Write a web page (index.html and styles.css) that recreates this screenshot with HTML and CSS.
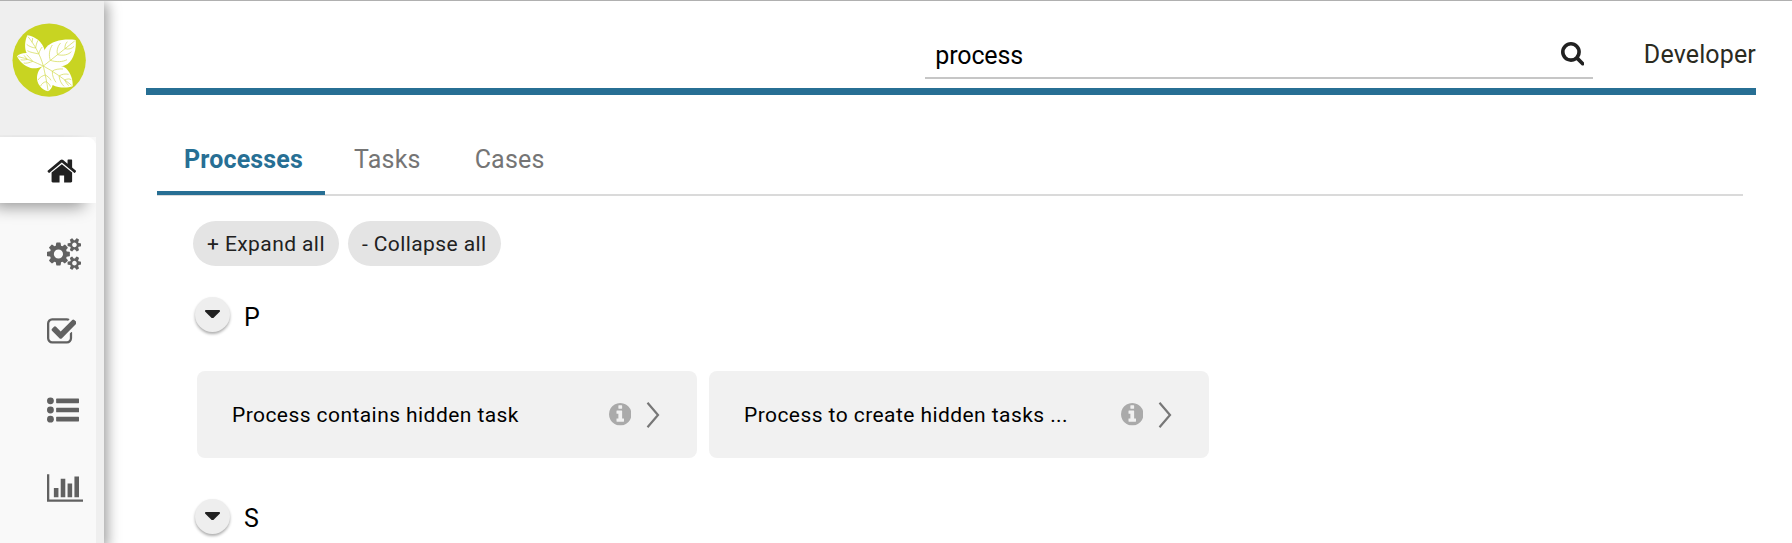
FILE: index.html
```html
<!DOCTYPE html>
<html lang="en">
<head>
<meta charset="utf-8">
<title>Search: process</title>
<link rel="stylesheet" href="styles.css">
</head>
<body>
<svg class="defs" width="0" height="0" aria-hidden="true">
  <symbol id="caret" viewBox="384 640 1024 576"><path d="M1408 704q0 26-19 45l-448 448q-19 19-45 19t-45-19l-448-448q-19-19-19-45t19-45 45-19h896q26 0 45 19t19 45z"/></symbol>
  <symbol id="info" viewBox="128 128 1536 1536"><path d="M1152 1376v-160q0-14-9-23t-23-9h-96v-512q0-14-9-23t-23-9h-320q-14 0-23 9t-9 23v160q0 14 9 23t23 9h96v320h-96q-14 0-23 9t-9 23v160q0 14 9 23t23 9h448q14 0 23-9t9-23zm-128-896v-160q0-14-9-23t-23-9h-192q-14 0-23 9t-9 23v160q0 14 9 23t23 9h192q14 0 23-9t9-23zm640 416q0 209-103 385.5t-279.5 279.5-385.5 103-385.5-103-279.5-279.5-103-385.5 103-385.5 279.5-279.5 385.5-103 385.5 103 279.5 279.5 103 385.5z"/></symbol>
  <symbol id="chevron" viewBox="0 0 14 26"><path d="M1.5 .8 12 13 1.5 25.2" fill="none" stroke="currentColor" stroke-width="2.2"/></symbol>
</svg>
<div class="app">
  <aside class="sidebar">
    <div class="brand">
      <svg class="logo" viewBox="36 68 222 222">
        <circle cx="147.5" cy="179.5" r="110" fill="#c8d422"/>
        <g fill="#fff">
          <path d="M130 197C136 186 139 170 134 150 128 124 104 108 82 105 74 122 73 145 80 158 65 158 55 162 51 168 59 184 72 197 92 203 105 206 118 202 130 197Z"/>
          <path d="M130 197C120 180 126 157 138 142 156 121 191 115 227 119 230 147 221 176 203 191 183 203 154 204 130 197Z"/>
          <path d="M130 197C150 195 183 191 198 204 213 219 219 239 218 258 201 264 175 263 158 254 156 263 151 269 144 273 123 268 110 249 111 231 112 216 119 203 130 197Z"/>
        </g>
        <g class="veins">
          <path d="M130 197 224 122M130 197C121 164 103 132 84 109M130 197C106 187 80 173 54 169M130 197C160 213 192 236 215 255M130 197C135 220 141 247 144 270"/>
          <path d="M151 180C145 164 149 146 157 134M173 163C168 151 175 134 182 128M195 145C194 137 197 129 202 124M151 180C169 186 189 185 201 178M173 163C190 167 206 163 214 154M195 145C206 148 216 145 222 138"/>
          <path d="M116 161C106 158 91 157 82 151M107 143C98 142 88 139 80 132M116 161C119 151 123 143 127 140M107 143C108 135 110 127 114 120M96 126C98 121 97 117 98 113M98 183C89 187 78 190 71 188M82 177C74 179 67 180 62 178M98 183C91 174 83 167 80 163M82 177 72 165"/>
          <path d="M157 212C165 207 177 205 189 206M177 227C186 221 196 220 206 222M194 239C202 235 209 235 214 238M157 212C156 226 162 238 168 246M177 227C179 241 184 250 192 258M194 239C197 246 202 251 206 256M136 224C127 226 119 231 114 239M139 244C131 245 125 250 122 257M136 224C143 228 149 233 153 240M139 244C145 248 149 253 151 259"/>
        </g>
      </svg>
    </div>
    <nav class="menu">
      <a class="menu-item active"><svg class="ico" viewBox="64 0 1664 1792" width="29.7" height="32"><path d="M1472 992v480q0 26-19 45t-45 19h-384v-384h-256v384h-384q-26 0-45-19t-19-45v-480q0-1 .5-3t.5-3l575-474 575 474q1 2 1 6zm223-69l-62 74q-8 9-21 11h-3q-13 0-21-7l-692-577-692 577q-12 8-24 7-13-2-21-11l-62-74q-8-10-7-23.5t11-21.5l719-599q32-26 76-26t76 26l244 204v-195q0-14 9-23t23-9h192q14 0 23 9t9 23v408l219 182q10 8 11 21.5t-7 23.5z"/></svg></a>
      <a class="menu-item"><svg class="ico" viewBox="-64 0 1920 1792" width="34.3" height="32"><path d="M832 896q0-106-75-181t-181-75-181 75-75 181 75 181 181 75 181-75 75-181zm768 512q0-52-38-90t-90-38-90 38-38 90q0 53 37.5 90.5t90.5 37.5 90.5-37.5 37.5-90.5zm0-1024q0-52-38-90t-90-38-90 38-38 90q0 53 37.5 90.5t90.5 37.5 90.5-37.5 37.5-90.5zm-384 421v185q0 10-7 19.5t-16 10.5l-155 24q-11 35-32 76 34 48 90 115 7 11 7 20 0 12-7 19-23 30-82.5 89.5t-78.5 59.5q-11 0-21-7l-115-90q-37 19-77 31-11 108-23 155-7 24-30 24h-186q-11 0-20-7.5t-10-17.5l-23-153q-34-10-75-31l-118 89q-7 7-20 7-11 0-21-8-144-133-144-160 0-9 7-19 10-14 41-53t47-61q-23-44-35-82l-152-24q-10-1-17-9.5t-7-19.5v-185q0-10 7-19.5t16-10.5l155-24q11-35 32-76-34-48-90-115-7-11-7-20 0-12 7-20 22-30 82-89t79-59q11 0 21 7l115 90q34-18 77-32 11-108 23-154 7-24 30-24h186q11 0 20 7.5t10 17.5l23 153q34 10 75 31l118-89q8-7 20-7 11 0 21 8 144 133 144 160 0 8-7 19-12 16-42 54t-45 60q23 48 34 82l152 23q10 2 17 10.5t7 19.5zm640 533v140q0 16-149 31-12 27-30 52 51 113 51 138 0 4-4 7-122 71-124 71-8 0-46-47t-52-68q-20 2-30 2t-30-2q-14 21-52 68t-46 47q-2 0-124-71-4-3-4-7 0-25 51-138-18-25-30-52-149-15-149-31v-140q0-16 149-31 13-29 30-52-51-113-51-138 0-4 4-7 4-2 35-20t59-34 30-16q8 0 46 46.5t52 67.5q20-2 30-2t30 2q51-71 92-112l6-2q4 0 124 70 4 3 4 7 0 25-51 138 17 23 30 52 149 15 149 31zm0-1024v140q0 16-149 31-12 27-30 52 51 113 51 138 0 4-4 7-122 71-124 71-8 0-46-47t-52-68q-20 2-30 2t-30-2q-14 21-52 68t-46 47q-2 0-124-71-4-3-4-7 0-25 51-138-18-25-30-52-149-15-149-31v-140q0-16 149-31 13-29 30-52-51-113-51-138 0-4 4-7 4-2 35-20t59-34 30-16q8 0 46 46.5t52 67.5q20-2 30-2t30 2q51-71 92-112l6-2q4 0 124 70 4 3 4 7 0 25-51 138 17 23 30 52 149 15 149 31z"/></svg></a>
      <a class="menu-item"><svg class="ico" viewBox="64 0 1664 1792" width="29.7" height="32"><path d="M1472 930v318q0 119-84.5 203.5t-203.5 84.5h-832q-119 0-203.5-84.5t-84.5-203.5v-832q0-119 84.5-203.5t203.5-84.5h832q63 0 117 25 15 7 18 23 3 17-9 29l-49 49q-10 10-23 10-3 0-9-2-23-6-45-6h-832q-66 0-113 47t-47 113v832q0 66 47 113t113 47h832q66 0 113-47t47-113v-254q0-13 9-22l64-64q10-10 23-10 6 0 12 3 20 8 20 29zm231-489l-814 814q-24 24-57 24t-57-24l-430-430q-24-24-24-57t24-57l110-110q24-24 57-24t57 24l263 263 647-647q24-24 57-24t57 24l110 110q24 24 24 57t-24 57z"/></svg></a>
      <a class="menu-item"><svg class="ico" viewBox="0 0 1792 1792" width="32" height="32"><circle cx="192" cy="384" r="192"/><circle cx="192" cy="896" r="192"/><circle cx="192" cy="1408" r="192"/><rect x="512" y="256" width="1280" height="256" rx="32"/><rect x="512" y="768" width="1280" height="256" rx="32"/><rect x="512" y="1280" width="1280" height="256" rx="32"/></svg></a>
      <a class="menu-item"><svg class="ico" viewBox="0 0 2048 1792" width="36.6" height="32"><path d="M640 896v512h-256v-512h256zm384-512v1024h-256v-1024h256zm1024 1152v128h-2048v-1536h128v1408h1920zm-640-896v768h-256v-768h256zm384-384v1152h-256v-1152h256z"/></svg></a>
    </nav>
  </aside>
  <main class="main">
    <header class="topbar">
      <div class="search">
        <span class="query">process</span>
        <svg class="search-ico" viewBox="64 128 1664 1664"><path d="M1216 832q0-185-131.5-316.5t-316.5-131.5-316.5 131.5-131.5 316.5 131.5 316.5 316.5 131.5 316.5-131.5 131.5-316.5zm512 832q0 52-38 90t-90 38q-54 0-90-38l-343-342q-179 124-399 124-143 0-273.5-55.5t-225-150-150-225-55.5-273.5 55.5-273.5 150-225 225-150 273.5-55.5 273.5 55.5 225 150 150 225 55.5 273.5q0 220-124 399l343 343q37 37 37 90z"/></svg>
      </div>
      <span class="user">Developer</span>
    </header>
    <div class="tabs">
      <a class="tab selected">Processes</a>
      <a class="tab">Tasks</a>
      <a class="tab">Cases</a>
    </div>
    <div class="content">
      <div class="actions">
        <button class="pill">+ Expand all</button>
        <button class="pill">- Collapse all</button>
      </div>
      <div class="group-head first"><button class="toggle"><svg class="caret"><use href="#caret"/></svg></button><span class="letter">P</span></div>
      <div class="cards">
        <div class="card"><span class="card-name">Process contains hidden task</span><svg class="info"><use href="#info"/></svg><svg class="chevron"><use href="#chevron"/></svg></div>
        <div class="card"><span class="card-name">Process to create hidden tasks ...</span><svg class="info"><use href="#info"/></svg><svg class="chevron"><use href="#chevron"/></svg></div>
      </div>
      <div class="group-head"><button class="toggle"><svg class="caret"><use href="#caret"/></svg></button><span class="letter">S</span></div>
    </div>
  </main>
</div>
</body>
</html>
```
FILE: styles.css
```css
* { box-sizing: border-box; }
body {
  margin: 0;
  height: 543px;
  overflow: hidden;
  background: #fff;
  color: #000;
  font-family: Roboto, sans-serif;
  font-size: 25px;
}
.defs { display: none; }
.app {
  display: flex;
  height: 543px;
  border-top: 1px solid #b0b0b0;
}
.sidebar {
  flex: none;
  width: 104px;
  height: 542px;
  background: #efefef;
  box-shadow: 2px 4px 12px 2px rgba(0, 0, 0, .36);
  clip-path: inset(0 -30px 0 0);
}
.brand { height: 136px; padding: 22px 0 0 12px; }
.logo { display: block; width: 74px; height: 74px; }
.veins { fill: none; stroke: #d3dc55; stroke-width: 2.2; }
.menu { width: 96px; height: 420px; background: #f9f9f9; }
.menu-item {
  display: flex;
  align-items: center;
  height: 78px;
  padding-left: 46.8px;
  color: #616161;
}
.menu-item.active {
  height: 66px;
  margin-bottom: 12px;
  padding-top: 1px;
  background: #fff;
  color: #212121;
  border-radius: 0 9px 0 0;
  box-shadow: -9px 7px 16px -3px rgba(0, 0, 0, .4);
  clip-path: inset(-2px 0 -24px 0);
}
.ico { display: block; fill: currentColor; }
.main { flex: 1; padding: 0 36px 0 42px; }
.topbar {
  display: flex;
  justify-content: flex-end;
  height: 94px;
  border-bottom: 7px solid #276f94;
}
.search {
  display: flex;
  justify-content: space-between;
  width: 668px;
  height: 78px;
  padding: 38px 8.5px 0 10.5px;
  border-bottom: 2px solid #c6c6c6;
}
.query { line-height: 33px; letter-spacing: -.15px; }
.search-ico { width: 23.5px; height: 23.5px; margin-top: 3px; fill: #212121; }
.user { margin: 37px 0 0 51px; line-height: 33px; letter-spacing: .15px; color: #2b2b1f; }
.tabs {
  display: flex;
  height: 101px;
  margin: 0 13px 0 11px;
  padding-top: 47px;
  border-bottom: 2px solid #dadada;
}
.tab {
  height: 53px;
  padding: 0 25px 0 29px;
  line-height: 35px;
  letter-spacing: .2px;
  color: #757575;
}
.tab.selected {
  width: 168px;
  padding-left: 27px;
  border-bottom: 4px solid #276f94;
  letter-spacing: .15px;
  color: #276f94;
  font-weight: 700;
}
.content { padding: 25px 0 0 47px; }
.actions { display: flex; gap: 9px; }
.pill {
  height: 45px;
  padding: 0 14px;
  border: 0;
  border-radius: 23px;
  background: #e4e4e4;
  color: #212121;
  font: 21px Roboto, sans-serif;
  letter-spacing: .41px;
  white-space: nowrap;
}
.group-head { display: flex; align-items: center; gap: 14px; height: 35px; margin: 31px 0 0 2px; }
.toggle {
  display: flex;
  align-items: center;
  justify-content: center;
  width: 35px;
  height: 35px;
  padding: 0 0 1px;
  border: 0;
  border-radius: 50%;
  background: #eee;
  box-shadow: 0 2px 3px rgba(0, 0, 0, .32);
}
.caret { width: 15px; height: 8.5px; fill: #212121; }
.letter { line-height: 32px; padding-top: 5px; }
.first .letter { padding-top: 7px; }
.cards { display: flex; gap: 12px; margin: 39px 0 41px 4px; }
.card {
  display: flex;
  align-items: center;
  width: 500px;
  height: 87px;
  padding: 0 37px 0 35px;
  border-radius: 8px;
  background: #f1f1f1;
}
.card-name { flex: 1; font-size: 21px; letter-spacing: .43px; white-space: nowrap; }
.info { width: 22.5px; height: 22.5px; fill: #aaa; }
.chevron { width: 14px; height: 26px; margin-left: 15px; color: #777; }
```
